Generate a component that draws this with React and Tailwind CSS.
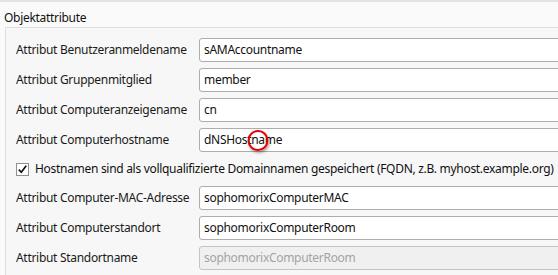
import React from 'react';

const rows1 = [
    { label: 'Attribut Benutzeranmeldename', value: 'sAMAccountname' },
    { label: 'Attribut Gruppenmitglied', value: 'member' },
    { label: 'Attribut Computeranzeigename', value: 'cn' },
    { label: 'Attribut Computerhostname', value: 'dNSHostname', marked: true },
];

const rows2 = [
    { label: 'Attribut Computer-MAC-Adresse', value: 'sophomorixComputerMAC' },
    { label: 'Attribut Computerstandort', value: 'sophomorixComputerRoom' },
    { label: 'Attribut Standortname', value: 'sophomorixComputerRoom', disabled: true },
];

// Markierung (roter Kreis) um "na" in dNSHostname
const MarkedValue = () => (
    <span>
        dNSHost
        <span className="relative">
            na
            <span className="absolute left-1/2 -translate-x-1/2 top-[-1px] w-[21px] h-[21px] rounded-full border-2 border-[#e60000] shadow-[1px_2px_3px_rgba(0,0,0,0.35)]" />
        </span>
        me
    </span>
);

const Row = ({ label, value, disabled, marked }) => (
    <div className="flex items-center h-[24px] mb-[6px]">
        <div className="w-[183px] shrink-0 text-[#1a1a1a] whitespace-nowrap">{label}</div>
        <div
            className={`w-[400px] shrink-0 h-[24px] flex items-center pl-[4px] rounded-[3px] border ${
                disabled
                    ? 'bg-[#f0f0f0] border-[#c4c4c4] text-[#a3a3a3]'
                    : 'bg-white border-[#adadad] text-[#111]'
            }`}
        >
            {marked ? <MarkedValue /> : value}
        </div>
    </div>
);

const App = () => {
    return (
        <div
            className="w-[558px] h-[275px] overflow-hidden bg-[#fafafa] border-t-2 border-[#e2e2e2] text-[12px] leading-[16px] tracking-[-0.3px]"
            style={{ fontFamily: '"Noto Sans", "Open Sans", sans-serif' }}
        >
            {/* Gruppentitel */}
            <div className="h-[25px] pl-[4px] pt-[8px] text-[#111]">Objektattribute</div>

            {/* Gruppenrahmen */}
            <div className="ml-[5px] h-[260px] border-l border-t border-[#dedede] bg-[#f7f7f7] pt-[10px] pl-[10px]">
                {rows1.map(r => (
                    <Row key={r.label} {...r} />
                ))}

                <div className="flex items-center h-[22px] mb-[6px]">
                    <span className="w-[13px] h-[13px] shrink-0 border border-[#8f8f8f] bg-white flex items-center justify-center">
                        <svg width="11" height="11" viewBox="0 0 11 11">
                            <path d="M1.8 5.6 L4.3 8.3 L9.2 1.8" fill="none" stroke="#111" strokeWidth="1.7" />
                        </svg>
                    </span>
                    <span className="ml-[6px] whitespace-nowrap text-[#111]">
                        Hostnamen sind als vollqualifizierte Domainnamen gespeichert (FQDN, z.B. myhost.example.org)
                    </span>
                </div>

                {rows2.map(r => (
                    <Row key={r.label} {...r} />
                ))}
            </div>
        </div>
    );
};

export default App;
